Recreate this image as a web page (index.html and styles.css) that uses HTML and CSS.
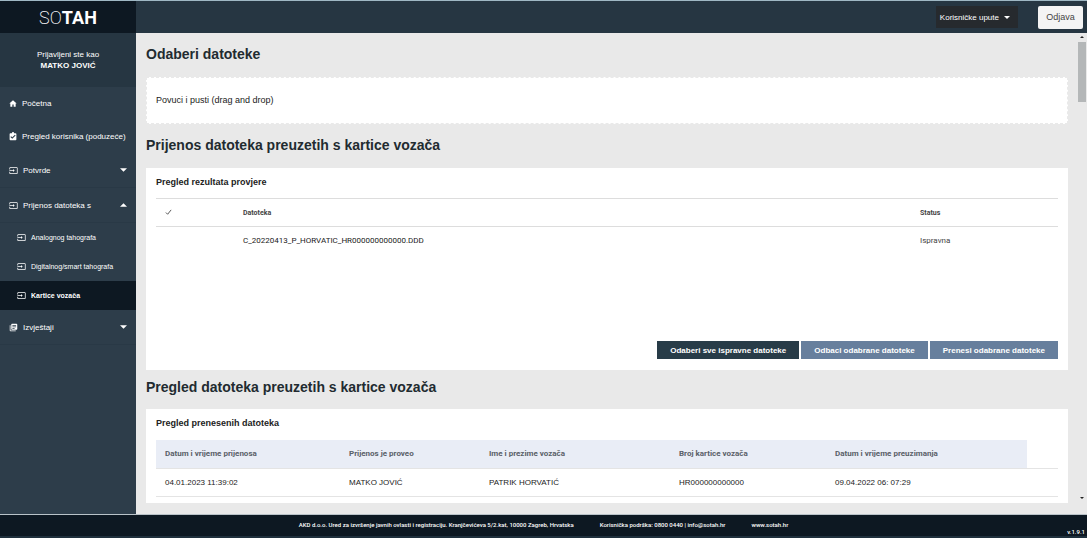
FILE: index.html
```
<!DOCTYPE html>
<html lang="hr">
<head>
    <meta charset="UTF-8">
    <meta name="viewport" content="width=device-width, initial-scale=1.0">
    <title>SOTAH - Kartice vozača</title>
    <link rel="stylesheet" href="styles.css">
</head>
<body>
    <svg class="sprite" aria-hidden="true">
        <symbol id="icon-input" viewBox="0 0 24 24">
            <path d="M21 3H3c-1.100 0-2 .9-2 2v4h2V5h18v14H3v-4H1v4c0 1.100.9 2 2 2h18c1.100 0 2-.9 2-2V5c0-1.100-.9-2-2-2zM11 16l4-4-4-4v3H1v2h10v3z"/>
        </symbol>
        <symbol id="icon-caret" viewBox="0 0 8 4">
            <path d="M0 0h8L4 4z"/>
        </symbol>
    </svg>

    <header class="topbar">
        <a class="logo" href="#">SO<b>TAH</b></a>
        <div class="topbar-actions">
            <button class="btn-help" type="button">Korisničke upute
                <svg class="caret caret-small"><use href="#icon-caret"/></svg>
            </button>
            <button class="btn-logout" type="button">Odjava</button>
        </div>
    </header>

    <div class="layout">
        <aside class="sidebar">
            <div class="user">
                <span>Prijavljeni ste kao</span>
                <strong>MATKO JOVIĆ</strong>
            </div>
            <nav>
                <a class="item" href="#">
                    <svg class="icon" viewBox="0 0 24 24"><path d="M12 2 1 12h3v10h6v-7h4v7h6V12h3z"/></svg>
                    Početna
                </a>
                <a class="item" href="#">
                    <svg class="icon" viewBox="2 0 20 24"><path d="M19 3h-4a3 3 0 0 0-6 0H5c-1.100 0-2 .9-2 2v15c0 1.100.9 2 2 2h14c1.100 0 2-.9 2-2V5c0-1.100-.9-2-2-2zm-9 15-5-5 2-2 3 3 7-7 2 2z"/></svg>
                    Pregled korisnika (poduzeće)
                </a>
                <a class="item item-group" href="#">
                    <svg class="icon icon-wide"><use href="#icon-input"/></svg>
                    Potvrde
                    <svg class="caret"><use href="#icon-caret"/></svg>
                </a>
                <a class="item item-group" href="#">
                    <svg class="icon icon-wide"><use href="#icon-input"/></svg>
                    Prijenos datoteka s
                    <svg class="caret caret-up"><use href="#icon-caret"/></svg>
                </a>
                <a class="item item-sub" href="#">
                    <svg class="icon icon-wide"><use href="#icon-input"/></svg>
                    Analognog tahografa
                </a>
                <a class="item item-sub" href="#">
                    <svg class="icon icon-wide"><use href="#icon-input"/></svg>
                    Digitalnog/smart tahografa
                </a>
                <a class="item item-sub active" href="#" aria-current="page">
                    <svg class="icon icon-wide"><use href="#icon-input"/></svg>
                    Kartice vozača
                </a>
                <a class="item item-group" href="#">
                    <svg class="icon icon-wide" viewBox="0 0 24 24"><path d="M4 6H2v14c0 1.100.9 2 2 2h14v-2H4zM20 2H8c-1.100 0-2 .9-2 2v12c0 1.100.9 2 2 2h12c1.100 0 2-.9 2-2V4c0-1.100-.9-2-2-2zm-1 9H9V9h10zm-4 4H9v-2h6zm4-8H9V5h10z"/></svg>
                    Izvještaji
                    <svg class="caret"><use href="#icon-caret"/></svg>
                </a>
            </nav>
        </aside>

        <main class="content">
            <h1>Odaberi datoteke</h1>
            <div class="dropzone">Povuci i pusti (drag and drop)</div>

            <h1>Prijenos datoteka preuzetih s kartice vozača</h1>
            <section class="card">
                <h2>Pregled rezultata provjere</h2>
                <div class="results">
                    <table class="files">
                        <colgroup>
                            <col class="col-check">
                            <col>
                            <col class="col-status">
                        </colgroup>
                        <thead>
                            <tr>
                                <th scope="col" aria-label="Odabir"><svg class="check" viewBox="0 0 8 8"><path d="M1 4l2 2 4-5"/></svg></th>
                                <th scope="col">Datoteka</th>
                                <th scope="col">Status</th>
                            </tr>
                        </thead>
                        <tbody>
                            <tr>
                                <td></td>
                                <td>C_20220413_P_HORVATIC_HR000000000000.DDD</td>
                                <td class="status">Ispravna</td>
                            </tr>
                        </tbody>
                    </table>
                </div>
                <div class="buttons">
                    <button class="btn btn-dark" type="button">Odaberi sve ispravne datoteke</button>
                    <button class="btn" type="button">Odbaci odabrane datoteke</button>
                    <button class="btn" type="button">Prenesi odabrane datoteke</button>
                </div>
            </section>

            <h1>Pregled datoteka preuzetih s kartice vozača</h1>
            <section class="card">
                <h2>Pregled prenesenih datoteka</h2>
                <table class="transfers">
                    <colgroup>
                        <col class="col-sent">
                        <col class="col-by">
                        <col class="col-driver">
                        <col class="col-card">
                        <col>
                        <col class="col-empty">
                    </colgroup>
                    <thead>
                        <tr>
                            <th scope="col">Datum i vrijeme prijenosa</th>
                            <th scope="col">Prijenos je proveo</th>
                            <th scope="col">Ime i prezime vozača</th>
                            <th scope="col">Broj kartice vozača</th>
                            <th scope="col">Datum i vrijeme preuzimanja</th>
                            <td></td>
                        </tr>
                    </thead>
                    <tbody>
                        <tr>
                            <td>04.01.2023 11:39:02</td>
                            <td>MATKO JOVIĆ</td>
                            <td>PATRIK HORVATIĆ</td>
                            <td>HR000000000000</td>
                            <td>09.04.2022 06: 07:29</td>
                            <td></td>
                        </tr>
                    </tbody>
                </table>
            </section>
        </main>

        <div class="scrollbar" aria-hidden="true">
            <svg class="arrow" viewBox="0 0 8 4"><path d="M0 4h8L4 0z"/></svg>
            <div class="thumb"></div>
            <svg class="arrow arrow-down" viewBox="0 0 8 4"><path d="M0 0h8L4 4z"/></svg>
        </div>
    </div>

    <footer class="footer">
        <span>AKD d.o.o. Ured za izvršenje javnih ovlasti i registraciju. Kranjčevićeva 5/2.kat, 10000 Zagreb, Hrvatska</span>
        <span>Korisnička podrška: 0800 0440 | info@sotah.hr</span>
        <a href="#">www.sotah.hr</a>
        <small class="version">v.1.9.1</small>
    </footer>
</body>
</html>
```
FILE: styles.css
```
* {
    box-sizing: border-box;
}
body {
    display: flex;
    flex-direction: column;
    min-height: 100vh;
    margin: 0;
    background-color: #e9e9e9;
    color: #222;
    font-family: "Liberation Sans", Arial, sans-serif;
    font-size: 8px;
}
a {
    color: inherit;
    text-decoration: none;
}
button {
    border: 0;
    font-family: inherit;
}
svg {
    fill: currentColor;
}
.sprite {
    display: none;
}

/* Top bar */
.topbar {
    display: flex;
    height: 33px;
    border-top: 1px solid #9fb8c4;
    background-color: #263642;
}
.logo {
    width: 136px;
    background-color: #0d1822;
    color: #fff;
    font-family: Roboto, sans-serif;
    font-size: 18px;
    font-weight: 200;
    line-height: 33px;
    text-align: center;
}
.logo b {
    font-weight: 700;
}
.topbar-actions {
    display: flex;
    flex: 1;
    align-items: center;
    justify-content: flex-end;
    gap: 20px;
    padding-right: 4px;
}
.btn-help {
    display: flex;
    align-items: center;
    gap: 5px;
    height: 22px;
    padding: 0 8px 0 4px;
    background-color: #262a2e;
    color: #fff;
    font-size: 8px;
}
.btn-logout {
    width: 45px;
    height: 23px;
    padding: 0;
    border-radius: 2px;
    background-color: #f4f4f4;
    color: #444;
    font-size: 9px;
}

.layout {
    display: flex;
    flex: 1;
}

/* Sidebar */
.sidebar {
    width: 136px;
    background-color: #2d3d4a;
    color: #fff;
}
.user {
    display: flex;
    flex-direction: column;
    justify-content: center;
    height: 54px;
    background-color: #263642;
    font-size: 8px;
    line-height: 11px;
    text-align: center;
}
.item {
    display: flex;
    align-items: center;
    gap: 5px;
    height: 33px;
    padding: 0 9px;
    font-size: 8px;
    white-space: nowrap;
}
.item-group {
    height: 35px;
    border-bottom: 1px solid #293946;
}
.item-sub {
    height: 29px;
    padding-left: 17px;
    font-size: 7px;
}
.active {
    background-color: #0d1822;
    font-weight: bold;
}
.icon {
    width: 8px;
    height: 9px;
}
.icon-wide {
    width: 9px;
}
.caret {
    width: 7px;
    height: 4px;
    margin-left: auto;
}
.caret-small {
    width: 6px;
    height: 3px;
}
.caret-up {
    transform: rotate(180deg);
}

/* Content */
.content {
    flex: 1;
    padding: 0 9px 11px 10px;
}
h1 {
    margin: 0;
    padding: 4px 0 5px;
    color: #222b30;
    font-size: 14px;
    line-height: 35px;
}
.card + h1 {
    padding: 0 0 4px;
}
h2 {
    margin: 0;
    font-size: 9px;
    line-height: 12px;
}
.dropzone {
    padding: 16px 9px;
    border: 1px dashed #e9e9e9;
    background-color: #fff;
    font-size: 9px;
    line-height: 13px;
}
.card {
    padding: 8px 10px 6px;
    background-color: #fff;
}
table {
    width: 100%;
    border-collapse: collapse;
    table-layout: fixed;
}
th, td {
    height: 28px;
    padding: 0 9px;
    text-align: left;
}
.results {
    min-height: 143px;
    padding-top: 10px;
}
.files {
    font-family: Roboto, sans-serif;
}
.files thead tr {
    border-top: 1px solid #ddd;
    border-bottom: 1px solid #ddd;
}
.files th {
    color: #444;
    font-size: 7px;
}
.files .status {
    color: #444;
}
.col-check {
    width: 78px;
}
.col-status {
    width: 147px;
}
.check {
    display: block;
    width: 7px;
    height: 7px;
    fill: none;
    stroke: currentColor;
}
.buttons {
    display: flex;
    justify-content: flex-end;
    gap: 2px;
    padding: 10px 0 5px;
}
.btn {
    height: 18px;
    padding: 0 13px;
    background-color: #677f9d;
    color: #fff;
    font-size: 8px;
    font-weight: bold;
}
.btn-dark {
    background-color: #283c48;
}
.transfers {
    margin-top: 11px;
}
.transfers tr {
    border-bottom: 1px solid #e4e4e4;
}
.transfers th {
    background-color: #e9edf6;
    color: #596068;
    font-family: Roboto, sans-serif;
    font-size: 8px;
}
.col-sent {
    width: 184px;
}
.col-by {
    width: 140px;
}
.col-driver {
    width: 190px;
}
.col-card {
    width: 156px;
}
.col-empty {
    width: 31px;
}

/* Scrollbar */
.scrollbar {
    display: flex;
    flex-direction: column;
    align-items: center;
    width: 10px;
    padding: 3px 1px 15px;
}
.thumb {
    width: 8px;
    height: 60px;
    margin-top: 4px;
    background-color: #b4b7b8;
}
.arrow {
    width: 4px;
    height: 2px;
}
.arrow-down {
    margin-top: auto;
}

/* Footer */
.footer {
    display: flex;
    position: relative;
    justify-content: center;
    gap: 26px;
    height: 24px;
    border-top: 1px solid #b9c2c8;
    border-bottom: 2px solid #1f303d;
    background-color: #0d1822;
    color: #fff;
    font-family: Roboto, sans-serif;
    font-size: 6px;
    font-weight: 500;
    line-height: 20px;
}
.version {
    position: absolute;
    right: 2px;
    bottom: 0;
    font-size: 6px;
    line-height: 8px;
}
```
